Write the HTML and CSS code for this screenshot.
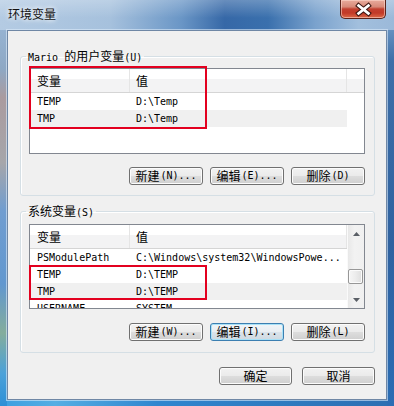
FILE: index.html
```html
<!DOCTYPE html>
<html>
<head>
<meta charset="utf-8">
<title>环境变量</title>
<link rel="stylesheet" href="styles.css">
</head>
<body>
<div class="window">
  <div class="titlebar">
    <span class="title">环境变量</span>
    <div class="close">
      <svg width="46" height="19" viewBox="0 0 46 19">
        <path d="M19 5.5 L29 13.5 M29 5.5 L19 13.5" stroke="#3e1712" stroke-width="5" stroke-linecap="square" fill="none"/>
        <path d="M19 5.5 L29 13.5 M29 5.5 L19 13.5" stroke="#ffffff" stroke-width="2.8" stroke-linecap="square" fill="none"/>
      </svg>
    </div>
  </div>
  <div class="client">
    <fieldset class="group g1">
      <legend><span class="m">Mario </span>的用户变量<span class="m">(U)</span></legend>
      <div class="list l1">
        <div class="lbody">
          <div class="hdr"><div class="c1">变量</div><div class="c2">值</div></div>
          <div class="row"><div class="c1 m">TEMP</div><div class="c2 m">D:\Temp</div></div>
          <div class="row alt"><div class="c1 m">TMP</div><div class="c2 m">D:\Temp</div></div>
        </div>
        <div class="side"><div class="side-hdr"></div></div>
        <div class="mark m1"></div>
      </div>
      <div class="btns">
        <button class="btn">新建<span class="m">(N)...</span></button>
        <button class="btn">编辑<span class="m">(E)...</span></button>
        <button class="btn">删除<span class="m">(D)</span></button>
      </div>
    </fieldset>
    <fieldset class="group g2">
      <legend>系统变量<span class="m">(S)</span></legend>
      <div class="list l2">
        <div class="lbody">
          <div class="hdr"><div class="c1">变量</div><div class="c2">值</div></div>
          <div class="row"><div class="c1 m">PSModulePath</div><div class="c2 m">C:\Windows\system32\WindowsPowe...</div></div>
          <div class="row"><div class="c1 m">TEMP</div><div class="c2 m">D:\TEMP</div></div>
          <div class="row alt"><div class="c1 m">TMP</div><div class="c2 m">D:\TEMP</div></div>
          <div class="row"><div class="c1 m">USERNAME</div><div class="c2 m">SYSTEM</div></div>
        </div>
        <div class="scroll">
          <div class="arrow"><svg width="7" height="4" viewBox="0 0 7 4"><path d="M0 4 L3.5 0 L7 4 Z" fill="#5a5f66"/></svg></div>
          <div class="track"><div class="thumb"></div></div>
          <div class="arrow"><svg width="7" height="4" viewBox="0 0 7 4"><path d="M0 0 L3.5 4 L7 0 Z" fill="#5a5f66"/></svg></div>
        </div>
        <div class="mark m2"></div>
      </div>
      <div class="btns">
        <button class="btn">新建<span class="m">(W)...</span></button>
        <button class="btn focus">编辑<span class="m">(I)...</span></button>
        <button class="btn">删除<span class="m">(L)</span></button>
      </div>
    </fieldset>
    <div class="footer">
      <button class="btn">确定</button>
      <button class="btn">取消</button>
    </div>
  </div>
</div>
</body>
</html>
```

FILE: styles.css
```css
* { box-sizing: border-box; }
html, body { margin: 0; padding: 0; }
body {
  width: 394px;
  height: 406px;
  overflow: hidden;
  font-family: "Noto Sans CJK SC", sans-serif;
  font-size: 12px;
  color: #000;
  background: #fff;
}
.m {
  font-family: "DejaVu Sans Mono", monospace;
  font-size: 10px;
}
.window {
  width: 394px;
  height: 406px;
  display: flex;
  flex-direction: column;
  background:
    linear-gradient(180deg, #9cbbdc 0%, #8ea8c4 17%, #aa9b9f 24%, #a6a6aa 40%, #709dd0 52%, #6197cf 70%, #84ad9c 82%, #4ba1d9 92%, #2d8fd6 100%) left top / 7px 100% no-repeat,
    linear-gradient(180deg, #8ab0d6 0%, #3e6fa8 15%, #2f62a0 60%, #2b6db4 100%) right top / 7px 100% no-repeat,
    linear-gradient(90deg, #3a9ee0 0%, #55aee3 14%, #2f86cf 40%, #2c6fb2 100%) left bottom / 100% 7px no-repeat,
    #4a7fb8;
}
.titlebar {
  height: 30px;
  flex: none;
  display: flex;
  justify-content: space-between;
  align-items: flex-start;
  padding: 0 8px;
  background:
    linear-gradient(180deg, rgba(255,255,255,0.25) 0%, rgba(255,255,255,0) 60%),
    linear-gradient(90deg, #b4cbe3 0%, #a6c1dd 28%, #6a96c6 46%, #3668a7 57%, #3a70ad 68%, #7aa2cd 80%, #a2bfdd 91%, #9bb9d9 100%);
}
.title {
  margin-top: 7px;
  line-height: 14px;
  color: #111;
  text-shadow: 0 0 4px #fff, 0 0 6px rgba(255,255,255,0.8);
}
.close {
  width: 46px;
  height: 19px;
  border: 1px solid #5b241c;
  border-top: none;
  border-radius: 0 0 5px 5px;
  background: linear-gradient(180deg, #e9ab9c 0%, #d88a79 38%, #c2402f 50%, #c23a28 72%, #dc6a48 100%);
  box-shadow: inset 0 0 0 1px rgba(255,220,210,0.55);
  display: flex;
}
.close svg { display: block; margin-left: -1px; }
.client {
  flex: 1;
  margin: 0 7px 6px;
  border: 1px solid #6f87a5;
  box-shadow: 0 0 0 1px rgba(220,235,250,0.6);
  background: #f0f0f0;
  display: flex;
  flex-direction: column;
  padding: 19px 11px 0 12px;
}
.group {
  margin: 0;
  border: 1px solid #d5dfe5;
  border-radius: 3px;
  box-shadow: inset 1px 1px 0 #fff;
  padding: 6px 9px 10px 8px;
  min-inline-size: 0;
}
.group legend {
  padding: 0 2px;
  margin-left: -3px;
  line-height: 12px;
  height: 12px;
}
.g2 {
  margin-top: 9px;
  padding: 7px 9px 11px 8px;
}
.list {
  position: relative;
  width: 336px;
  border: 1px solid #828790;
  background: #fff;
  display: flex;
}
.l1 { height: 86px; }
.l2 { height: 85px; }
.lbody {
  width: 317px;
  flex: none;
  overflow: hidden;
}
.hdr, .side-hdr {
  height: 24px;
  background: linear-gradient(180deg, #fff 0%, #fff 45%, #f3f3f4 45%, #f3f3f4 100%);
  border-bottom: 1px solid #d5d5d5;
}
.hdr { display: flex; }
.hdr > div {
  padding-top: 1px;
  line-height: 22px;
  border-right: 1px solid #e5e5e5;
}
.c1 {
  width: 100px;
  flex: none;
  padding-left: 7px;
  white-space: nowrap;
  overflow: hidden;
}
.c2 {
  width: 217px;
  flex: none;
  padding-left: 6px;
  white-space: nowrap;
  overflow: hidden;
}
.row {
  display: flex;
  height: 17px;
  line-height: 17px;
}
.alt { background: #f0f0f0; }
.side { width: 17px; flex: none; }
.scroll {
  width: 17px;
  flex: none;
  display: flex;
  flex-direction: column;
  background: linear-gradient(90deg, #e8e8e8 0%, #f2f2f2 40%, #f0f0f0 100%);
  border-left: 1px solid #fafafa;
}
.arrow {
  height: 17px;
  flex: none;
  display: flex;
  align-items: center;
  justify-content: center;
}
.arrow svg { display: block; }
.track { flex: 1; }
.thumb {
  margin-top: 27px;
  width: 15px;
  height: 15px;
  border: 1px solid #979797;
  border-radius: 2px;
  background: linear-gradient(90deg, #f6f6f6 0%, #ececec 50%, #dedede 100%);
  box-shadow: inset 0 0 0 1px #fbfbfb;
}
.mark {
  position: absolute;
  border: 2px solid #e3001f;
}
.m1 { left: -1px; top: -3px; width: 178px; height: 63px; }
.m2 { left: -1px; top: 40px; width: 178px; height: 35px; }
.btns {
  display: flex;
  justify-content: flex-end;
  gap: 7px;
  width: 336px;
  margin-top: 13px;
}
.g2 .btns { margin-top: 14px; }
.btn {
  width: 74px;
  height: 18px;
  margin: 0;
  padding: 0;
  font-family: "Noto Sans CJK SC", sans-serif;
  font-size: 12px;
  line-height: 16px;
  color: #000;
  border: 1px solid #707070;
  border-radius: 3px;
  background: linear-gradient(180deg, #f2f2f2 0%, #ebebeb 48%, #dddddd 52%, #cfcfcf 100%);
  box-shadow: inset 0 0 0 1px #fcfcfc;
  display: flex;
  align-items: center;
  justify-content: center;
}
.btn .m { margin-left: 1px; }
.focus {
  border-color: #3c7fb1;
  box-shadow: inset 0 0 0 1px #a8e1f7;
  background: linear-gradient(180deg, #f1f5f8 0%, #e9eef2 48%, #dae3ea 52%, #cfd9e1 100%);
}
.footer {
  display: flex;
  justify-content: flex-end;
  gap: 10px;
  margin-top: 14px;
}
.footer .btn { width: 73px; }
```
